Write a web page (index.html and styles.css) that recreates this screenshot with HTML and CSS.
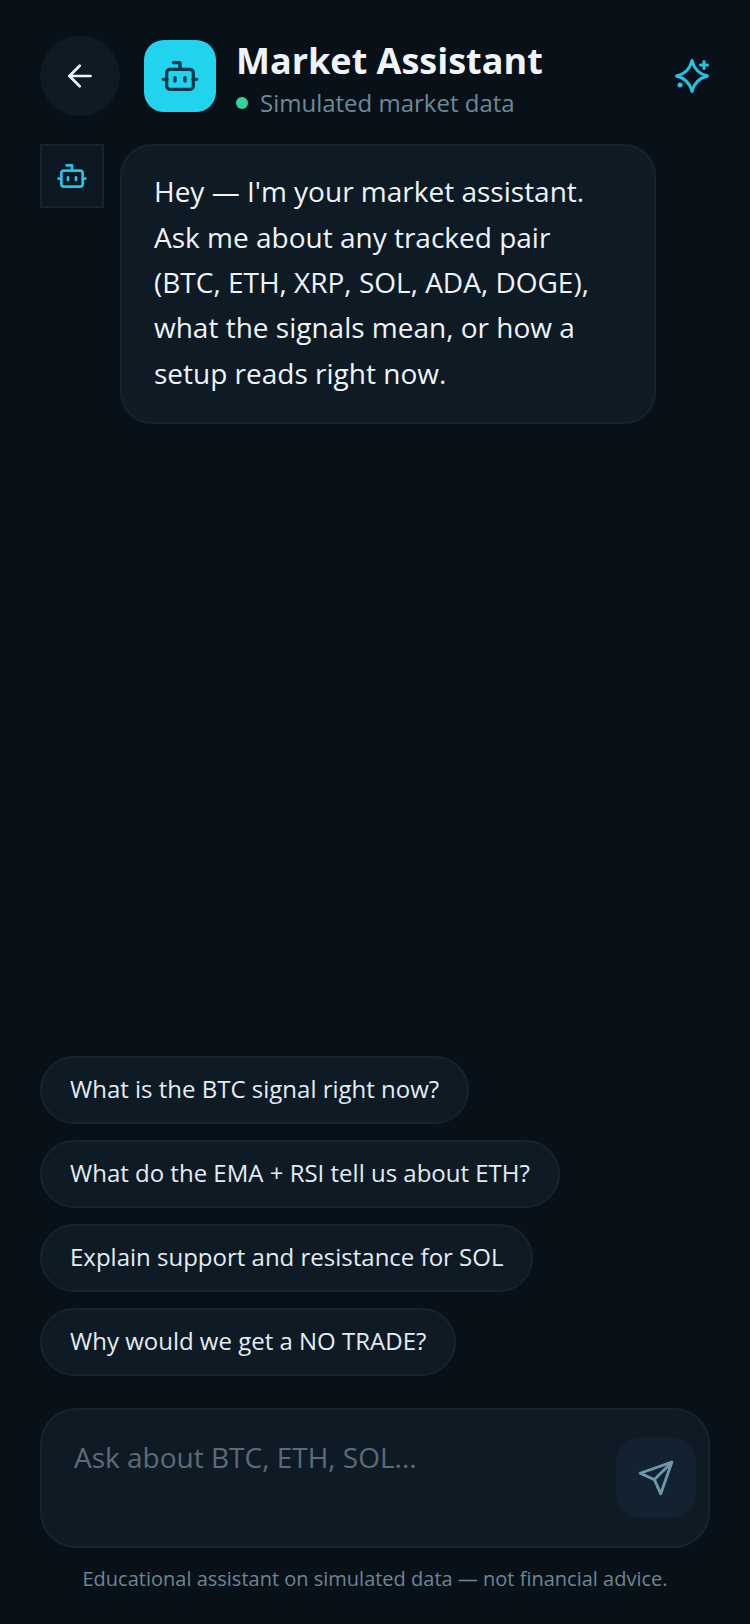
FILE: index.html
```html
<!DOCTYPE html>
<html lang="en">

<head>
    <meta charset="UTF-8">
    <meta name="viewport" content="width=device-width, initial-scale=1.0">
    <title>Market Assistant</title>
    <link rel="stylesheet" href="styles.css">
</head>

<body>
    <div class="page">
        <header class="top">
            <button class="back" aria-label="Back">
                <svg width="32" height="32" viewBox="0 0 32 32" fill="none" stroke="#f1f5f9" stroke-width="2.7" stroke-linecap="round" stroke-linejoin="round">
                    <path d="M26.5 16H5.5"></path>
                    <path d="M15.7 5.8 5.5 16l10.2 10.2"></path>
                </svg>
            </button>
            <div class="logo">
                <svg width="40" height="40" viewBox="0 0 24 24" fill="none" stroke="#0b3a4e" stroke-width="2" stroke-linecap="round" stroke-linejoin="round">
                    <path d="M12 8V4H8"></path>
                    <rect x="4" y="8" width="16" height="12" rx="2"></rect>
                    <path d="M2 14h2"></path>
                    <path d="M20 14h2"></path>
                    <path d="M15 13v2"></path>
                    <path d="M9 13v2"></path>
                </svg>
            </div>
            <div class="titles">
                <h1>Market Assistant</h1>
                <div class="status"><span class="dot"></span>Simulated market data</div>
            </div>
            <svg class="sparkle" width="40" height="40" viewBox="0 0 40 40" fill="none" stroke="#22c5e5" stroke-width="3" stroke-linecap="round" stroke-linejoin="round">
                <path d="M22 4.5Q25 17 37.5 20 25 23 22 35.5 19 23 6.5 20 19 17 22 4.5Z"></path>
                <path d="M34 5.5v7"></path>
                <path d="M30.5 9h7"></path>
                <path d="M10 29h.01" stroke-width="5"></path>
            </svg>
        </header>

        <section class="messages">
            <div class="msg">
                <div class="msg-icon">
                    <svg width="32" height="32" viewBox="0 0 24 24" fill="none" stroke="#22c5e5" stroke-width="2" stroke-linecap="round" stroke-linejoin="round">
                        <path d="M12 8V4H8"></path>
                        <rect x="4" y="8" width="16" height="12" rx="2"></rect>
                        <path d="M2 14h2"></path>
                        <path d="M20 14h2"></path>
                        <path d="M15 13v2"></path>
                        <path d="M9 13v2"></path>
                    </svg>
                </div>
                <div class="bubble">Hey — I'm your market assistant. Ask me about any tracked pair (BTC, ETH, XRP, SOL, ADA, DOGE), what the signals mean, or how a setup reads right now.</div>
            </div>
        </section>

        <div class="chips">
            <button class="chip">What is the BTC signal right now?</button>
            <button class="chip">What do the EMA + RSI tell us about ETH?</button>
            <button class="chip">Explain support and resistance for SOL</button>
            <button class="chip">Why would we get a NO TRADE?</button>
        </div>

        <div class="composer">
            <div class="placeholder">Ask about BTC, ETH, SOL...</div>
            <button class="send" aria-label="Send">
                <svg width="38" height="38" viewBox="0 0 24 24" fill="none" stroke="#6f97ab" stroke-width="1.8" stroke-linecap="round" stroke-linejoin="round">
                    <path d="m22 2-7 20-4-9-9-4Z"></path>
                    <path d="M22 2 11 13"></path>
                </svg>
            </button>
        </div>

        <p class="note">Educational assistant on simulated data — not financial advice.</p>
    </div>
</body>

</html>
```

FILE: styles.css
```css
* {
    box-sizing: border-box;
}

body {
    margin: 0;
    background-color: #081118;
    color: #f1f5f9;
    font-family: "Open Sans", "Noto Sans", sans-serif;
}

button {
    font-family: inherit;
    padding: 0;
}

.page {
    height: 1624px;
    display: flex;
    flex-direction: column;
    padding: 36px 40px 0;
    overflow: hidden;
}

.top {
    display: flex;
    align-items: center;
    height: 80px;
}

.back {
    width: 80px;
    height: 80px;
    border-radius: 50%;
    border: 0;
    background-color: #0e1a24;
    display: flex;
    align-items: center;
    justify-content: center;
    flex-shrink: 0;
}

.logo {
    width: 72px;
    height: 72px;
    margin-left: 24px;
    border-radius: 20px;
    background-color: #22d3ee;
    display: flex;
    align-items: center;
    justify-content: center;
    flex-shrink: 0;
}

.titles {
    margin-left: 20px;
    flex: 1;
    align-self: flex-start;
    padding-top: 3px;
}

h1 {
    margin: 0 0 2px;
    font-size: 36px;
    line-height: 44px;
    font-weight: 700;
    color: #eef4f9;
}

.status {
    display: flex;
    align-items: center;
    font-size: 24px;
    line-height: 36px;
    color: #6f8899;
}

.dot {
    width: 12px;
    height: 12px;
    border-radius: 50%;
    background-color: #34d399;
    margin-right: 12px;
}

.messages {
    flex: 1;
    padding-top: 28px;
}

.msg {
    display: flex;
    align-items: flex-start;
    gap: 16px;
}

.msg-icon {
    width: 64px;
    height: 64px;
    border: 2px solid #15242f;
    background-color: #0d1822;
    display: flex;
    align-items: center;
    justify-content: center;
    flex-shrink: 0;
}

.bubble {
    width: 536px;
    height: 280px;
    padding: 23.4px 32px 0;
    border: 2px solid #15242f;
    border-radius: 32px;
    background-color: #0e1a24;
    font-size: 28px;
    line-height: 45.36px;
    color: #eef4f9;
}

.chips {
    display: flex;
    flex-direction: column;
    align-items: flex-start;
    gap: 16px;
}

.chip {
    height: 68px;
    padding: 0 28px 4px;
    border: 2px solid #15242f;
    border-radius: 34px;
    background-color: #0e1a24;
    color: #e2ecf4;
    font-size: 24px;
}

.composer {
    height: 140px;
    margin-top: 32px;
    padding: 28px 12px 0 32px;
    border: 2px solid #15242f;
    border-radius: 36px;
    background-color: #0e1b25;
    display: flex;
    justify-content: space-between;
    align-items: flex-start;
}

.placeholder {
    font-size: 28px;
    line-height: 38px;
    color: #5b6b7b;
}

.send {
    width: 80px;
    height: 80px;
    border: 0;
    border-radius: 24px;
    background-color: #132230;
    display: flex;
    align-items: center;
    justify-content: center;
}

.note {
    margin: 16px 0 0;
    height: 60px;
    text-align: center;
    font-size: 20px;
    line-height: 30px;
    color: #6e8596;
}
```
